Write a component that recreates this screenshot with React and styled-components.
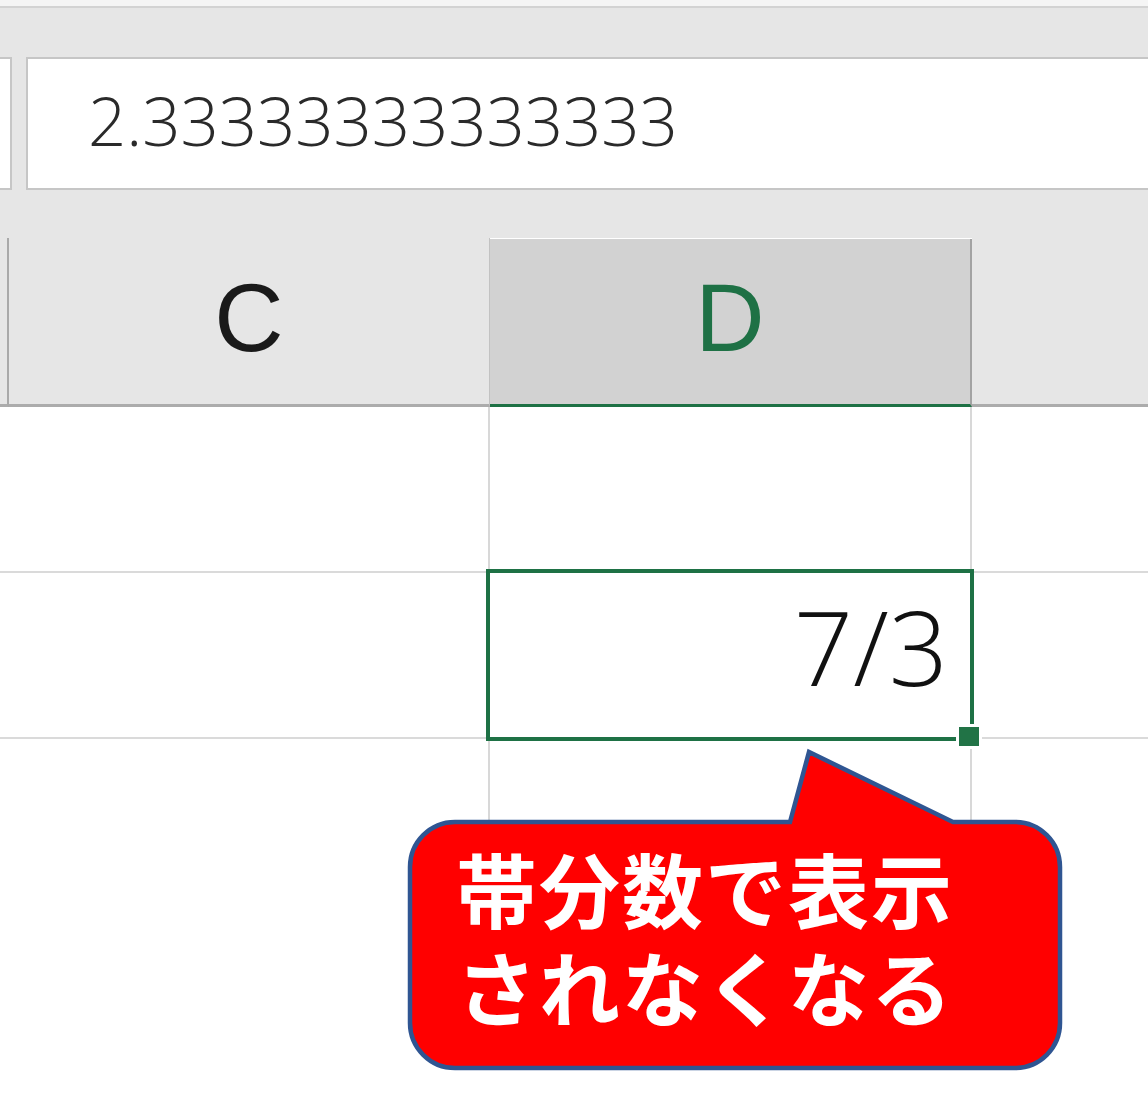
import React from 'react';
import styled, { createGlobalStyle } from 'styled-components';

const Global = createGlobalStyle`
  html, body { margin: 0; padding: 0; background: #ffffff; }
  body {
    width: 1148px;
    height: 1094px;
    overflow: hidden;
    font-family: "Open Sans", "Liberation Sans", sans-serif;
  }
`;

const Page = styled.div`
  position: relative;
  width: 1148px;
  height: 1094px;
  background: #ffffff;
  display: flex;
  flex-direction: column;
  overflow: hidden;
`;

const TitleStrip = styled.div`
  height: 6px;
  background: #f5f5f5;
  border-bottom: 2px solid #d3d3d3;
`;

const FormulaBar = styled.div`
  background: #e6e6e6;
  padding: 49px 0 48px;
  display: flex;
  gap: 14px;
`;

const NameBox = styled.div`
  width: 10px;
  height: 129px;
  background: #ffffff;
  border: 2px solid #c6c6c6;
  border-left: none;
`;

const FormulaBox = styled.div`
  flex: 1;
  margin-right: -6px;
  background: #ffffff;
  border: 2px solid #c6c6c6;
  border-right: none;
  display: flex;
  align-items: center;
  padding: 0 0 7px 60px;
  box-sizing: border-box;
  height: 133px;
  font-family: "Open Sans", sans-serif;
  font-weight: 300;
  font-size: 67px;
  color: #2a2a2a;
`;

const Sheet = styled.div`
  display: grid;
  grid-template-columns: 9px 481px 482px 1fr;
  grid-template-rows: 169px 166px 166px 144px;
`;

const HeaderCell = styled.div`
  box-sizing: border-box;
  background: ${(p) => (p.$selected ? '#d2d2d2' : '#e6e6e6')};
  margin-top: ${(p) => (p.$selected ? '1px' : '0')};
  border-bottom: 3px solid ${(p) => (p.$selected ? '#1e7145' : '#acacac')};
  border-right: ${(p) => p.$divider || 'none'};
  display: flex;
  align-items: center;
  justify-content: center;
  padding-bottom: 7px;
  font-family: "Liberation Sans", Arial, sans-serif;
  font-size: 96px;
  color: ${(p) => (p.$selected ? '#1e7145' : '#1a1a1a')};
`;

const Cell = styled.div`
  position: relative;
  box-sizing: border-box;
  background: #ffffff;
  border-right: ${(p) => (p.$noRight ? 'none' : '2px solid #d8d8d8')};
  border-bottom: ${(p) => (p.$noBottom ? 'none' : '2px solid #dadada')};
  z-index: ${(p) => (p.$active ? 2 : 0)};
  display: flex;
  align-items: center;
  justify-content: flex-end;
  padding: 0 22px 19px 0;
  font-family: "Open Sans", sans-serif;
  font-weight: 300;
  font-size: 104px;
  color: #111111;
`;

const Selection = styled.div`
  position: absolute;
  top: -4px;
  left: -4px;
  right: -4px;
  bottom: -4px;
  border: 4px solid #1e7145;
  pointer-events: none;
`;

const FillHandle = styled.div`
  position: absolute;
  right: -9px;
  bottom: -9px;
  width: 20px;
  height: 19px;
  background: #217346;
  box-shadow: 0 0 0 3px #ffffff;
`;

const Callout = styled.div`
  position: absolute;
  left: 406px;
  top: 744px;
  width: 658px;
  height: 328px;
  z-index: 5;
`;

const CalloutShape = styled.svg`
  position: absolute;
  inset: 0;
  width: 100%;
  height: 100%;
`;

const CalloutText = styled.div`
  position: relative;
  padding: 94px 0 0 50px;
  font-family: "Noto Sans CJK JP", "Noto Sans CJK SC", sans-serif;
  font-weight: 700;
  font-size: 81px;
  line-height: 98px;
  letter-spacing: 2px;
  color: #ffffff;
  white-space: nowrap;
`;

const calloutPath = (() => {
  const l = 4, t = 78, r = 654, b = 324, rad = 45;
  return [
    `M ${l + rad} ${t}`,
    `L 384 ${t}`,
    `L 403 8`,
    `L 547 ${t}`,
    `L ${r - rad} ${t}`,
    `A ${rad} ${rad} 0 0 1 ${r} ${t + rad}`,
    `L ${r} ${b - rad}`,
    `A ${rad} ${rad} 0 0 1 ${r - rad} ${b}`,
    `L ${l + rad} ${b}`,
    `A ${rad} ${rad} 0 0 1 ${l} ${b - rad}`,
    `L ${l} ${t + rad}`,
    `A ${rad} ${rad} 0 0 1 ${l + rad} ${t}`,
    'Z',
  ].join(' ');
})();

export default function App() {
  return (
    <Page>
      <Global />
      <TitleStrip />
      <FormulaBar>
        <NameBox />
        <FormulaBox>2.33333333333333</FormulaBox>
      </FormulaBar>
      <Sheet>
        <HeaderCell $divider="2px solid #a9a9a9" />
        <HeaderCell $divider="1px solid #c2c2c2">C</HeaderCell>
        <HeaderCell $selected $divider="2px solid #a3a3a3">D</HeaderCell>
        <HeaderCell />

        <Cell />
        <Cell />
        <Cell />
        <Cell $noRight />

        <Cell />
        <Cell />
        <Cell $active>
          7/3
          <Selection />
          <FillHandle />
        </Cell>
        <Cell $noRight />

        <Cell $noBottom />
        <Cell $noBottom />
        <Cell $noBottom />
        <Cell $noRight $noBottom />
      </Sheet>
      <Callout>
        <CalloutShape viewBox="0 0 658 328">
          <path d={calloutPath} fill="#ff0000" stroke="#2f5592" strokeWidth="4.5" strokeLinejoin="miter" />
        </CalloutShape>
        <CalloutText>
          帯分数で表示
          <br />
          されなくなる
        </CalloutText>
      </Callout>
    </Page>
  );
}
